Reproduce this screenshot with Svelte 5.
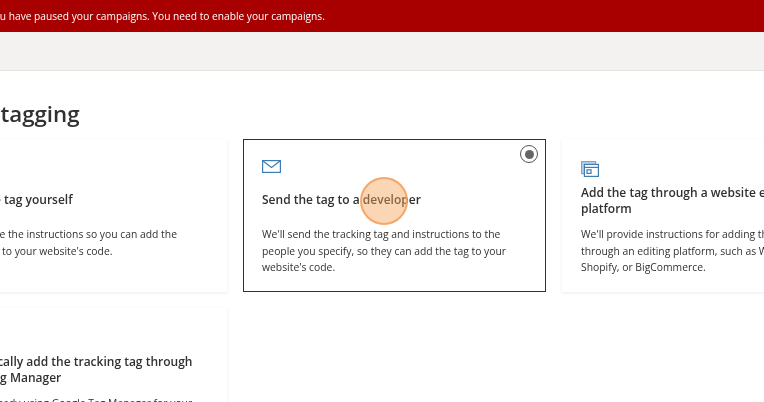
<script>
  const cards = [
    {
      title: "Install the tag yourself",
      text: "We'll provide the instructions so you can add the tracking tag to your website's code.",
      icon: "none"
    },
    {
      title: "Send the tag to a developer",
      text: "We'll send the tracking tag and instructions to the people you specify, so they can add the tag to your website's code.",
      icon: "mail",
      selected: true
    },
    {
      title: "Add the tag through a website e-commerce platform",
      text: "We'll provide instructions for adding the tag through an editing platform, such as WordPress, Shopify, or BigCommerce.",
      icon: "window",
      tall: true
    },
    {
      title: "Automatically add the tracking tag through Google Tag Manager",
      text: "If you're already using Google Tag Manager for your website, we can add the tag for you.",
      icon: "none",
      tall: true
    }
  ];
</script>

<div class="page">
  <div class="alert"><span>You have paused your campaigns. You need to enable your campaigns.</span></div>
  <div class="toolbar"></div>
  <main>
    <h1>UET tagging</h1>
    <div class="grid">
      {#each cards as card}
        <div class="card" class:selected={card.selected} class:tall={card.tall}>
          {#if card.selected}
            <span class="radio"><span class="dot"></span></span>
          {/if}
          <div class="icon">
            {#if card.icon === "mail"}
              <svg width="19" height="13" viewBox="0 0 19 13" fill="none" stroke="#3f7cb5" stroke-width="1.2">
                <rect x="0.6" y="0.6" width="17.8" height="11.8" />
                <path d="M1 1l8.5 6.5L18 1" />
              </svg>
            {:else if card.icon === "window"}
              <svg width="18" height="17" viewBox="0 0 18 17" fill="none" stroke="#3f7cb5" stroke-width="1.2">
                <rect x="0.6" y="1.6" width="14" height="12" fill="#c3d5e6" stroke="#7fa6c9" />
                <rect x="3.4" y="4.4" width="14" height="12" fill="#fff" />
                <path d="M3.4 7.4H17.4" />
                <rect x="6" y="9.8" width="4" height="3.6" />
              </svg>
            {/if}
          </div>
          <h2>{card.title}</h2>
          <p>{card.text}</p>
        </div>
      {/each}
    </div>
  </main>
  <span class="pointer"></span>
</div>

<style>
  :global(body) {
    margin: 0;
    background: #fff;
  }

  .page {
    position: relative;
    width: 764px;
    height: 402px;
    overflow: hidden;
    font-family: "Open Sans", "Noto Sans", sans-serif;
    color: #323130;
    filter: blur(0.3px);
  }

  .alert {
    height: 32px;
    background: #a80000;
    color: #fff;
    font-size: 10.2px;
    line-height: 32px;
    white-space: nowrap;
    margin-left: -12px;
  }

  .toolbar {
    height: 38px;
    background: #f3f2f1;
    border-bottom: 1px solid #e4e3e2;
  }

  main {
    margin-left: -76px;
  }

  h1 {
    margin: 28px 0 0 0;
    padding-left: 29px;
    font-size: 22.3px;
    line-height: 30px;
    font-weight: 600;
    white-space: nowrap;
  }

  .grid {
    display: grid;
    grid-template-columns: repeat(3, 303px);
    grid-auto-rows: 153px;
    gap: 16px;
    margin-top: 10px;
  }

  .card {
    position: relative;
    box-sizing: border-box;
    background: #fff;
    padding: 21px 19px 0;
    box-shadow: 0 1px 3px rgba(0, 0, 0, 0.08);
  }

  .card.selected {
    border: 1px solid #323130;
    padding: 20px 18px 0;
    box-shadow: none;
  }

  .icon {
    height: 32px;
  }

  .icon svg {
    display: block;
  }

  .tall .icon {
    height: 25px;
  }

  h2 {
    max-width: 250px;
    margin: 0 0 18px;
    font-size: 12px;
    line-height: 16px;
    font-weight: 600;
  }

  .tall h2 {
    margin-bottom: 9px;
  }

  p {
    max-width: 250px;
    margin: 0;
    font-size: 10.35px;
    line-height: 16.5px;
  }

  .radio {
    position: absolute;
    top: 5px;
    right: 7px;
    width: 16px;
    height: 16px;
    border: 1px solid #555;
    border-radius: 50%;
    display: flex;
    align-items: center;
    justify-content: center;
  }

  .dot {
    width: 9px;
    height: 9px;
    border-radius: 50%;
    background: #666;
  }

  .pointer {
    position: absolute;
    left: 360px;
    top: 177px;
    width: 44px;
    height: 44px;
    border: 2px solid rgba(244, 162, 97, 0.9);
    border-radius: 50%;
    background: rgba(247, 165, 90, 0.45);
  }
</style>
